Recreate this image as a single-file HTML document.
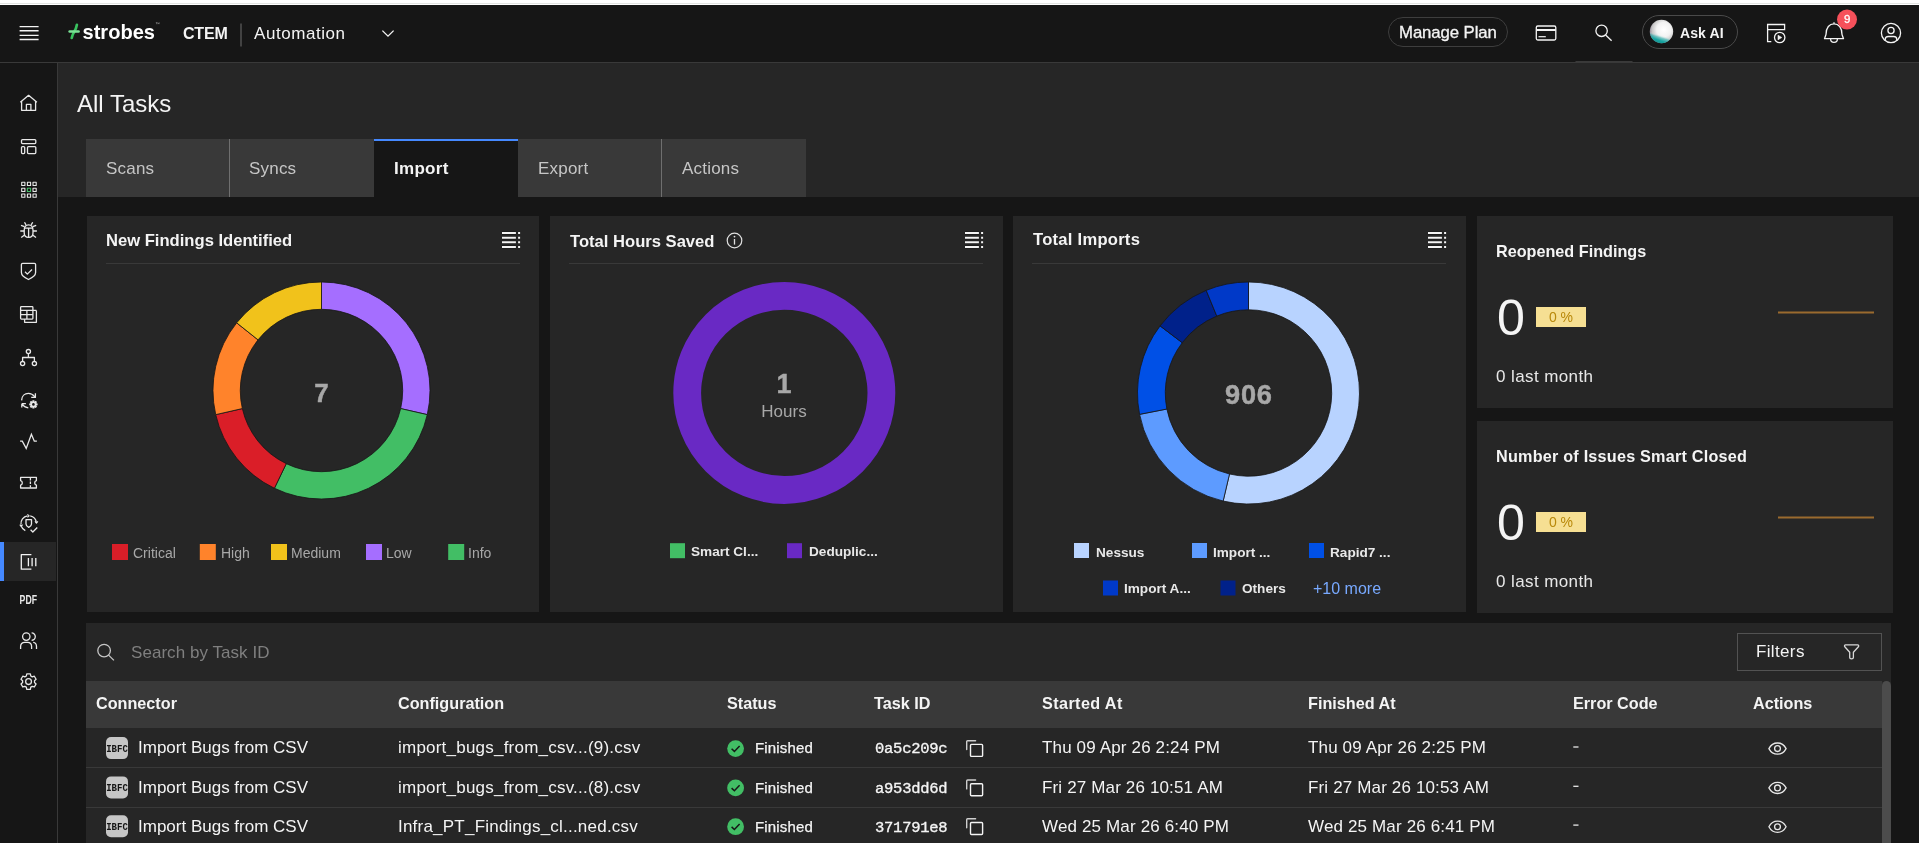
<!DOCTYPE html>
<html><head><meta charset="utf-8">
<style>
*{box-sizing:border-box;margin:0;padding:0}
html,body{width:1919px;height:843px;overflow:hidden;background:#161616;font-family:"Liberation Sans",sans-serif;color:#f4f4f4}
.a{position:absolute}
.t{position:absolute;line-height:1;white-space:nowrap;will-change:transform}
.b{font-weight:bold}
svg{position:absolute;overflow:visible;will-change:transform}
</style></head><body>
<!-- top white strip -->
<div class="a" style="left:0;top:0;width:1919px;height:5px;background:#fff"></div>
<div class="a" style="left:0;top:3px;width:1919px;height:1px;background:#e2e4e2"></div>
<!-- header -->
<div class="a" style="left:0;top:5px;width:1919px;height:57px;background:#161616"></div>
<div class="a" style="left:0;top:62px;width:1919px;height:1px;background:#393939"></div>
<div id="hdr">
<svg style="left:0;top:0" width="1919" height="62" viewBox="0 0 1919 62">
 <g stroke="#f4f4f4" stroke-width="1.3" fill="none">
  <path d="M19.6 26.55H38.6M19.6 30.75H38.6M19.6 35.3H38.6M19.6 39.5H38.6"/>
 </g>
 <!-- logo bolt -->
 <path d="M76.9 24.8C76.4 27.6 75.6 29.5 74.4 31.4C73.2 33.3 72.3 35.4 71.7 38" stroke="#39c25f" stroke-width="2.7" fill="none" stroke-linecap="round"/>
 <path d="M69.6 31.4H78.6" stroke="#7be296" stroke-width="2.5" stroke-linecap="round"/>
 <text x="82.5" y="38.9" font-family="Liberation Sans" font-weight="bold" font-size="20.5" fill="#fff" textLength="72.5" lengthAdjust="spacingAndGlyphs">strobes</text>
 <path d="M155.8 22.6h1.4M156.5 22.6v1.6M157.8 24.2v-1.6l0.7 1 0.7 -1v1.6" stroke="#bbb" stroke-width="0.4" fill="none"/>
 <path d="M241 23.5V46.5" stroke="#6f6f6f" stroke-width="1"/>
 <path d="M382.4 30.6L388 36.2L393.6 30.6" stroke="#f4f4f4" stroke-width="1.3" fill="none"/>
 <!-- manage plan -->
 <rect x="1388.5" y="17.5" width="119" height="29" rx="14.5" fill="none" stroke="#3e3e3e" stroke-width="1"/>
 <!-- card icon -->
 <g stroke="#f4f4f4" fill="none" stroke-width="1.3">
  <rect x="1536.3" y="26" width="19.5" height="14" rx="1.5"/>
  <path d="M1536.3 30H1555.8" stroke-width="2"/>
  <path d="M1538.5 36.7H1545.8" stroke-width="1.2"/>
  <circle cx="1601.6" cy="30.8" r="5.7"/>
  <path d="M1605.6 35L1611.6 40.8"/>
 </g>
 <!-- ask ai -->
 <rect x="1642.5" y="15.5" width="95" height="33" rx="16.5" fill="none" stroke="#4a4a4a" stroke-width="1"/>
 <defs>
  <radialGradient id="orb" cx="0.6" cy="0.42" r="0.62">
   <stop offset="0" stop-color="#ffffff"/><stop offset="0.5" stop-color="#f2f2f2"/><stop offset="0.8" stop-color="#c8c8c8"/><stop offset="1" stop-color="#8f8595"/>
  </radialGradient>
  <linearGradient id="teal" x1="0.3" y1="1" x2="0.55" y2="0.2">
   <stop offset="0" stop-color="#128f8d"/><stop offset="0.18" stop-color="#19a6a3"/><stop offset="0.33" stop-color="#2fb3b0" stop-opacity="0.55"/><stop offset="0.47" stop-color="#ffffff" stop-opacity="0"/>
  </linearGradient>
 </defs>
 <circle cx="1661.5" cy="31.5" r="11.7" fill="url(#orb)"/>
 <circle cx="1661.5" cy="31.5" r="11.7" fill="url(#teal)"/>
 <!-- cal play -->
 <g stroke="#f4f4f4" fill="none" stroke-width="1.3">
  <path d="M1771.3 41.6H1767.6V24.5H1784.6V29.6H1767.6"/>
  <circle cx="1779.7" cy="37.5" r="5.2"/>
  <path d="M1778 35.2V39.8L1781.8 37.5Z" fill="#f4f4f4" stroke-width="0.6"/>
  <!-- bell -->
  <path d="M1834 22.3V23.6M1826 34.5C1826 27.5 1829.5 23.8 1834 23.8C1838.5 23.8 1842 27.5 1842 34.5L1843.5 38.7H1824.5Z" stroke-linejoin="round"/>
  <path d="M1830.6 38.9A3.4 3.4 0 0 0 1837.4 38.9"/>
  <!-- user -->
  <circle cx="1891" cy="33" r="9.6"/>
  <circle cx="1891" cy="30.5" r="3.1"/>
  <path d="M1885.2 41.1V39.6C1885.2 37.5 1886.4 36.5 1888.3 36.5H1893.7C1895.6 36.5 1896.8 37.5 1896.8 39.6V41.1"/>
 </g>
 <circle cx="1847" cy="19.5" r="10" fill="#f6505a"/>
 <!-- search underline -->
 <path d="M1575.5 61.5H1632.5" stroke="#3a3a3a" stroke-width="1"/>
</svg>
<div class="t b" style="left:183px;top:25.5px;font-size:16px;color:#f4f4f4;letter-spacing:-0.2px">CTEM</div>
<div class="t" style="left:254px;top:24.5px;font-size:17px;color:#f4f4f4;letter-spacing:0.55px">Automation</div>
<div class="t" style="left:1398.8px;top:24.5px;font-size:16.8px;color:#f4f4f4;-webkit-text-stroke:0.3px #f4f4f4;letter-spacing:-0.1px">Manage Plan</div>
<div class="t b" style="left:1679.5px;top:26px;font-size:14px;color:#f4f4f4;letter-spacing:0.1px">Ask AI</div>
<div class="t" style="left:1843.6px;top:14px;font-size:11.5px;color:#fff;-webkit-text-stroke:0.3px #fff">9</div>
</div>
<!-- sidebar -->
<div class="a" style="left:0;top:63px;width:57px;height:780px;background:#161616"></div>
<div class="a" style="left:57px;top:63px;width:1px;height:780px;background:#393939"></div>
<div id="side">
<div class="a" style="left:0;top:542px;width:56px;height:39px;background:#262626"></div>
<div class="a" style="left:0;top:542px;width:4px;height:39px;background:#4589ff"></div>
<svg style="left:0;top:0" width="57" height="843" viewBox="0 0 57 843">
 <g stroke="#e8e8e8" stroke-width="1.3" fill="none" stroke-linejoin="round">
  <!-- home -->
  <path d="M20.3 102.2L28.6 95.3L36.9 102.2M21.6 101.2V110.3H35.6V101.2M26.4 110.3V104.4H30.9V110.3"/>
  <!-- layout -->
  <rect x="21.5" y="139.6" width="14.3" height="4" rx="1"/>
  <rect x="21.5" y="146.6" width="3.2" height="7" rx="1"/>
  <rect x="27.5" y="146.6" width="8.3" height="7" rx="1"/>
  <!-- grid -->
  <g stroke-width="1.1">
   <rect x="21.7" y="182.3" width="3.2" height="3.2"/><rect x="27.4" y="182.3" width="3.2" height="3.2"/><rect x="33" y="182.3" width="3.2" height="3.2"/>
   <rect x="21.7" y="188.3" width="3.2" height="3.2"/><rect x="33" y="188.3" width="3.2" height="3.2"/>
   <rect x="21.7" y="194" width="3.2" height="3.2"/><rect x="27.4" y="194" width="3.2" height="3.2"/><rect x="33" y="194" width="3.2" height="3.2"/>
   <rect x="27.4" y="188.3" width="3.2" height="3.2" stroke="#42be65"/>
  </g>
  <!-- bug -->
  <path d="M24.2 230.5C24.2 226.5 26 224.8 28.6 224.8C31.2 224.8 33 226.5 33 230.5V233C33 235.6 31.2 237.3 28.6 237.3C26 237.3 24.2 235.6 24.2 233Z"/>
  <path d="M28.6 228V237.3M24.2 228.2H33M26 224.9L24.5 222.2M31.2 224.9L32.7 222.2M24.2 231H20.3M33 231H36.9M24.4 226.7L21 225.3M32.8 226.7L36.2 225.3M24.6 235L21.2 237.6M32.6 235L36 237.6"/>
  <!-- shield check -->
  <path d="M21.4 264.6C21.4 263.8 22 263.3 22.7 263.3H34.4C35.1 263.3 35.6 263.8 35.6 264.6V272.5C35.6 275 33.3 277.3 28.5 279.5C23.7 277.3 21.4 275 21.4 272.5Z"/>
  <path d="M25 271.8L27.3 274.1L32 269.5"/>
  <!-- table copy -->
  <rect x="20.6" y="306.7" width="12.3" height="12.4" rx="0.8"/>
  <path d="M20.6 310.4H36.4M20.6 314.7H32.9M26.9 310.4V319.1"/>
  <path d="M36.4 310.4V322.3H24.6V319.3" />
  <!-- hierarchy -->
  <circle cx="28.4" cy="351.6" r="2.1"/>
  <circle cx="22.6" cy="363.6" r="2.1"/>
  <circle cx="34.4" cy="363.6" r="2.1"/>
  <path d="M28.4 353.7V357.5M22.6 361.5V357.5H34.4V361.5"/>
  <!-- refresh gear -->
  <path d="M21.6 400.4C21.8 396 24.8 393.4 28.4 393.4C31 393.4 33.2 394.7 34.9 396.8"/>
  <path d="M35.4 393.2V397.4H31.2"/>
  <path d="M21.8 403.7H25.9M21.8 403.7V407.4M22.2 404.1C23.6 406.3 25.7 407.5 28.3 407.9"/>
  <path d="M32.43 400.21L34.37 400.21L34.52 401.62L34.57 401.64L35.68 400.75L37.05 402.12L36.16 403.23L36.18 403.28L37.59 403.43L37.59 405.37L36.18 405.52L36.16 405.57L37.05 406.68L35.68 408.05L34.57 407.16L34.52 407.18L34.37 408.59L32.43 408.59L32.28 407.18L32.23 407.16L31.12 408.05L29.75 406.68L30.64 405.57L30.62 405.52L29.21 405.37L29.21 403.43L30.62 403.28L30.64 403.23L29.75 402.12L31.12 400.75L32.23 401.64L32.28 401.62Z" fill="#e8e8e8" stroke="none"/>
  <circle cx="33.4" cy="404.4" r="1.3" fill="#161616" stroke="none"/>
  <!-- activity -->
  <path d="M20.1 441.2L22.3 441.2L26.2 448.4L31.4 434.3L34.3 441.2H36.9" stroke-linejoin="miter"/>
  <!-- ticket -->
  <path d="M20.6 477.4H36.4V480.6A2.4 2.4 0 0 0 36.4 485.2V488H20.6V485.2A2.4 2.4 0 0 0 20.6 480.6Z"/>
  <path d="M30.4 478V480.5M30.4 481.6V484M30.4 485.2V487.6"/>
  <!-- shield rotate -->
  <path d="M21 524.5A7.7 7.7 0 0 1 27.5 515.8M30.2 515.8A7.7 7.7 0 0 1 36.3 522.5M25.3 530.6A7.7 7.7 0 0 1 21.3 526.2"/>
  <path d="M27.4 514.3L29.2 515.9L27.4 517.3M35 521.2L36.4 523.2L37.9 521.3M19.8 524.6L21.1 526.3L22.6 524.7" stroke-width="1.1"/>
  <path d="M26 519.6H31.5V524C31.5 525.5 30.4 526.5 28.75 527.3C27.1 526.5 26 525.5 26 524Z"/>
  <path d="M30.6 529.8L32.8 532L37.3 527.5"/>
  <!-- report active -->
  <path d="M31.4 554.7H21.3V569.2H31.4M28.4 558V566.2M32.1 558V566.2M35.8 558V566.2" stroke="#f4f4f4"/>
  <!-- people -->
  <circle cx="26.3" cy="636.6" r="3.7"/>
  <path d="M20.6 649V646.5C20.6 643.9 22.3 642.3 24.9 642.3H27.4C30 642.3 31.6 643.9 31.6 646.5V649"/>
  <path d="M31.6 632.9A3.7 3.7 0 0 1 31.6 640.3M33.2 642.4C35.3 642.7 36.5 644.3 36.5 646.5V649"/>
  <!-- gear -->
  <circle cx="28.55" cy="681.6" r="2.9"/>
  <path d="M26.77 673.90L30.33 673.90L30.80 676.04L32.24 676.87L34.33 676.21L36.10 679.29L34.49 680.76L34.49 682.44L36.10 683.91L34.33 686.99L32.24 686.33L30.80 687.16L30.33 689.30L26.77 689.30L26.30 687.16L24.86 686.33L22.77 686.99L21.00 683.91L22.61 682.44L22.61 680.76L21.00 679.29L22.77 676.21L24.86 676.87L26.30 676.04Z" stroke-linejoin="round"/>
 </g>
 <text x="19.6" y="604.3" font-family="Liberation Sans" font-weight="bold" font-size="12" fill="#e8e8e8" textLength="17.4" lengthAdjust="spacingAndGlyphs">PDF</text>
</svg>
</div>
<!-- title area -->
<div class="a" style="left:58px;top:63px;width:1861px;height:134px;background:#262626"></div>
<div class="t" style="left:77px;top:92px;font-size:24px;color:#f4f4f4">All Tasks</div>
<div id="tabs">
<div class="a" style="left:86px;top:139px;width:143px;height:58px;background:#393939"></div>
<div class="a" style="left:229px;top:139px;width:1px;height:58px;background:#6f6f6f"></div>
<div class="a" style="left:230px;top:139px;width:144px;height:58px;background:#393939"></div>
<div class="a" style="left:374px;top:139px;width:144px;height:58px;background:#161616"></div>
<div class="a" style="left:374px;top:139px;width:144px;height:2px;background:#4589ff"></div>
<div class="a" style="left:518px;top:139px;width:143px;height:58px;background:#393939"></div>
<div class="a" style="left:661px;top:139px;width:1px;height:58px;background:#6f6f6f"></div>
<div class="a" style="left:662px;top:139px;width:144px;height:58px;background:#393939"></div>
<div class="t" style="left:105.5px;top:159.8px;font-size:17px;color:#c6c6c6;letter-spacing:0.2px">Scans</div>
<div class="t" style="left:249px;top:159.8px;font-size:17px;color:#c6c6c6;letter-spacing:0.2px">Syncs</div>
<div class="t b" style="left:393.5px;top:159.8px;font-size:17px;color:#f4f4f4;letter-spacing:0.3px">Import</div>
<div class="t" style="left:537.5px;top:159.8px;font-size:17px;color:#c6c6c6;letter-spacing:0.2px">Export</div>
<div class="t" style="left:682px;top:159.8px;font-size:17px;color:#c6c6c6;letter-spacing:0.2px">Actions</div>
</div>
<!-- content -->
<div class="a" style="left:58px;top:197px;width:1861px;height:646px;background:#161616"></div>
<div class="a" style="left:87px;top:216px;width:452px;height:396px;background:#262626"></div>
<div class="a" style="left:550px;top:216px;width:453px;height:396px;background:#262626"></div>
<div class="a" style="left:1013px;top:216px;width:453px;height:396px;background:#262626"></div>
<div class="a" style="left:1477px;top:216px;width:416px;height:192px;background:#262626"></div>
<div class="a" style="left:1477px;top:421px;width:416px;height:192px;background:#262626"></div>
<div id="cards">
<svg style="left:0;top:0" width="1919" height="843" viewBox="0 0 1919 843">
 <path d="M106 263.5H520M569 263.5H983M1032 263.5H1446" stroke="#393939" stroke-width="1"/>
 <g transform="translate(502,232)"><g stroke="#000" stroke-opacity="0.35" stroke-width="3.2"><path d="M0 1.1H13.9M0 5.8H13.9M0 10.3H13.9M0 14.9H13.9"/></g><g stroke="#f4f4f4" stroke-width="2"><path d="M0 1.1H13.9M0 5.8H13.9M0 10.3H13.9M0 14.9H13.9M16.1 1.1H18.1M16.1 5.8H18.1M16.1 10.3H18.1M16.1 14.9H18.1"/></g></g>
 <g transform="translate(965,232)"><g stroke="#000" stroke-opacity="0.35" stroke-width="3.2"><path d="M0 1.1H13.9M0 5.8H13.9M0 10.3H13.9M0 14.9H13.9"/></g><g stroke="#f4f4f4" stroke-width="2"><path d="M0 1.1H13.9M0 5.8H13.9M0 10.3H13.9M0 14.9H13.9M16.1 1.1H18.1M16.1 5.8H18.1M16.1 10.3H18.1M16.1 14.9H18.1"/></g></g>
 <g transform="translate(1428,232)"><g stroke="#000" stroke-opacity="0.35" stroke-width="3.2"><path d="M0 1.1H13.9M0 5.8H13.9M0 10.3H13.9M0 14.9H13.9"/></g><g stroke="#f4f4f4" stroke-width="2"><path d="M0 1.1H13.9M0 5.8H13.9M0 10.3H13.9M0 14.9H13.9M16.1 1.1H18.1M16.1 5.8H18.1M16.1 10.3H18.1M16.1 14.9H18.1"/></g></g>
 <circle cx="734.5" cy="240.5" r="7.3" fill="none" stroke="#e0e0e0" stroke-width="1.2"/>
 <path d="M734.5 239V244.6" stroke="#e0e0e0" stroke-width="1.3"/>
 <circle cx="734.5" cy="236.6" r="0.9" fill="#e0e0e0"/>
 <path d="M321.50 282.00A108.5 108.5 0 0 1 427.28 414.64L400.66 408.57A81.2 81.2 0 0 0 321.50 309.30Z" fill="#a56eff" stroke="#161616" stroke-width="0.8"/>
<path d="M427.28 414.64A108.5 108.5 0 0 1 274.42 488.26L286.27 463.66A81.2 81.2 0 0 0 400.66 408.57Z" fill="#42be65" stroke="#161616" stroke-width="0.8"/>
<path d="M274.42 488.26A108.5 108.5 0 0 1 215.72 414.64L242.34 408.57A81.2 81.2 0 0 0 286.27 463.66Z" fill="#da1e28" stroke="#161616" stroke-width="0.8"/>
<path d="M215.72 414.64A108.5 108.5 0 0 1 236.67 322.85L258.02 339.87A81.2 81.2 0 0 0 242.34 408.57Z" fill="#ff832b" stroke="#161616" stroke-width="0.8"/>
<path d="M236.67 322.85A108.5 108.5 0 0 1 321.50 282.00L321.50 309.30A81.2 81.2 0 0 0 258.02 339.87Z" fill="#f1c21b" stroke="#161616" stroke-width="0.8"/>
 <circle cx="784.3" cy="392.9" r="97.1" fill="none" stroke="#6929c4" stroke-width="27.8"/>
 <path d="M1248.50 282.00A111 111 0 1 1 1223.15 501.07L1229.50 474.00A83.2 83.2 0 1 0 1248.50 309.80Z" fill="#b8d3ff" stroke="#161616" stroke-width="0.8"/>
<path d="M1223.15 501.07A111 111 0 0 1 1139.58 414.37L1166.86 409.02A83.2 83.2 0 0 0 1229.50 474.00Z" fill="#5d9bff" stroke="#161616" stroke-width="0.8"/>
<path d="M1139.58 414.37A111 111 0 0 1 1160.09 325.89L1182.23 342.70A83.2 83.2 0 0 0 1166.86 409.02Z" fill="#0050e6" stroke="#161616" stroke-width="0.8"/>
<path d="M1160.09 325.89A111 111 0 0 1 1206.20 290.38L1216.79 316.08A83.2 83.2 0 0 0 1182.23 342.70Z" fill="#00218a" stroke="#161616" stroke-width="0.8"/>
<path d="M1206.20 290.38A111 111 0 0 1 1248.50 282.00L1248.50 309.80A83.2 83.2 0 0 0 1216.79 316.08Z" fill="#0039c8" stroke="#161616" stroke-width="0.8"/>
 <rect x="112" y="544" width="16" height="16" fill="#da1e28"/>
 <rect x="199.8" y="544" width="16" height="16" fill="#ff832b"/>
 <rect x="271" y="544" width="16" height="16" fill="#f1c21b"/>
 <rect x="366" y="544" width="16" height="16" fill="#a56eff"/>
 <rect x="448.2" y="544" width="16" height="16" fill="#42be65"/>
 <rect x="670" y="543.2" width="15" height="15" fill="#42be65"/>
 <rect x="787" y="543.2" width="15" height="15" fill="#6929c4"/>
 <rect x="1074" y="543" width="15" height="15" fill="#b8d3ff"/>
 <rect x="1192" y="543" width="15" height="15" fill="#5d9bff"/>
 <rect x="1309" y="543" width="15" height="15" fill="#0050e6"/>
 <rect x="1103" y="580.5" width="15" height="15" fill="#0039c8"/>
 <rect x="1220.5" y="580.5" width="15" height="15" fill="#00218a"/>
 <path d="M1778 312.5H1874" stroke="#9a6a2e" stroke-width="2"/>
 <path d="M1778 517.5H1874" stroke="#9a6a2e" stroke-width="2"/>
</svg>
<div class="t b" style="left:106px;top:233px;font-size:16.6px;color:#f4f4f4">New Findings Identified</div>
<div class="t b" style="left:569.5px;top:234px;font-size:16.6px;color:#f4f4f4">Total Hours Saved</div>
<div class="t b" style="left:1032.5px;top:231.5px;font-size:16.6px;color:#f4f4f4;letter-spacing:0.25px">Total Imports</div>
<div class="t b" style="left:306px;top:379.7px;font-size:26px;-webkit-text-stroke:0.4px #a8a8a8;color:#a8a8a8;width:31px;text-align:center">7</div>
<div class="t b" style="left:760px;top:370.7px;font-size:27px;-webkit-text-stroke:0.4px #a8a8a8;color:#a8a8a8;width:48px;text-align:center">1</div>
<div class="t" style="left:740px;top:403.2px;font-size:17px;color:#a8a8a8;width:88px;text-align:center">Hours</div>
<div class="t b" style="left:1208px;top:380.9px;font-size:27.2px;color:#a8a8a8;width:81px;text-align:center;letter-spacing:0.7px;text-indent:0.7px;-webkit-text-stroke:0.5px #a8a8a8">906</div>
<div class="t" style="left:132.6px;top:546px;font-size:14px;color:#a8a8a8">Critical</div>
<div class="t" style="left:220.7px;top:546px;font-size:14px;color:#a8a8a8">High</div>
<div class="t" style="left:291.1px;top:546px;font-size:14px;color:#a8a8a8">Medium</div>
<div class="t" style="left:386.4px;top:546px;font-size:14px;color:#a8a8a8">Low</div>
<div class="t" style="left:468.1px;top:546px;font-size:14px;color:#a8a8a8">Info</div>
<div class="t b" style="left:690.8px;top:545.3px;font-size:13.6px;color:#e8e8e8">Smart Cl...</div>
<div class="t b" style="left:808.5px;top:545.3px;font-size:13.6px;color:#e8e8e8">Deduplic...</div>
<div class="t b" style="left:1095.5px;top:545.5px;font-size:13.6px;color:#e8e8e8">Nessus</div>
<div class="t b" style="left:1213px;top:545.5px;font-size:13.6px;color:#e8e8e8">Import ...</div>
<div class="t b" style="left:1330.2px;top:545.5px;font-size:13.6px;color:#e8e8e8">Rapid7 ...</div>
<div class="t b" style="left:1124px;top:582.2px;font-size:13.6px;color:#e8e8e8">Import A...</div>
<div class="t b" style="left:1241.6px;top:582.2px;font-size:13.6px;color:#e8e8e8">Others</div>
<div class="t" style="left:1313px;top:580.6px;font-size:16px;color:#78a9ff">+10 more</div>
<!-- KPI -->
<div class="t b" style="left:1496px;top:243.3px;font-size:16.2px;color:#f4f4f4">Reopened Findings</div>
<div class="t" style="left:1496.7px;top:293px;font-size:50.2px;color:#f4f4f4;font-weight:300">0</div>
<div class="a" style="left:1536px;top:306.6px;width:50px;height:20.2px;background:#f6df93"></div>
<div class="t" style="left:1536px;top:310.2px;width:50px;text-align:center;font-size:14px;color:#b8880a">0 %</div>
<div class="t" style="left:1496px;top:368px;font-size:17px;color:#e8e8e8;letter-spacing:0.4px">0 last month</div>
<div class="t b" style="left:1496px;top:448.3px;font-size:16.2px;color:#f4f4f4;letter-spacing:0.22px">Number of Issues Smart Closed</div>
<div class="t" style="left:1496.7px;top:498px;font-size:50.2px;color:#f4f4f4;font-weight:300">0</div>
<div class="a" style="left:1536px;top:511.6px;width:50px;height:20.2px;background:#f6df93"></div>
<div class="t" style="left:1536px;top:515.2px;width:50px;text-align:center;font-size:14px;color:#b8880a">0 %</div>
<div class="t" style="left:1496px;top:573px;font-size:17px;color:#e8e8e8;letter-spacing:0.4px">0 last month</div>
</div>
<!-- table -->
<div class="a" style="left:86px;top:623px;width:1805px;height:220px;background:#262626"></div>
<div class="a" style="left:86px;top:681px;width:1796px;height:47px;background:#393939"></div>
<div id="table">
<div class="a" style="left:1882px;top:681px;width:9px;height:162px;background:#262626"></div>
<div class="a" style="left:1882px;top:681px;width:9px;height:170px;background:#4c4c4c;border-radius:4.5px"></div>
<div class="a" style="left:1737px;top:633px;width:145px;height:38px;border:1px solid #525252"></div>
<svg style="left:0;top:0" width="1919" height="843" viewBox="0 0 1919 843">
 <g stroke="#c6c6c6" stroke-width="1.3" fill="none"><circle cx="104.1" cy="650.6" r="6.3"/><path d="M108.6 655.1L113.9 660.4"/></g>
 <path d="M1845.6 644.9H1857.6C1858.6 644.9 1859.1 646 1858.4 646.8L1853.4 652.3V657.6C1853.4 658.4 1852.9 658.9 1851.5 658.9C1850.1 658.9 1849.7 658.4 1849.7 657.6V652.3L1844.8 646.8C1844.1 646 1844.6 644.9 1845.6 644.9Z" stroke="#d8d8d8" stroke-width="1.3" fill="none" stroke-linejoin="round"/>
 <rect x="106" y="737.1" width="22" height="22" rx="5" fill="#c6c6c6"/>
<text x="117" y="751.6" text-anchor="middle" font-family="Liberation Mono" font-weight="bold" font-size="10.6" fill="#161616" textLength="21.6" lengthAdjust="spacingAndGlyphs">IBFC</text>
<circle cx="735.6" cy="748.6" r="8.4" fill="#42be65"/>
<path d="M731.6 748.8L734.4 751.4L739.6 746.0" stroke="#161616" stroke-width="1.5" fill="none"/>
<g stroke="#e8e8e8" stroke-width="1.4" fill="none" stroke-linecap="round"><path d="M966.7 749.6V741.6Q966.7 740.7 967.6 740.7H975.6" stroke="#cfcfcf"/><rect x="970.5" y="744.4" width="12.1" height="12" rx="1" stroke="#f4f4f4"/></g>
<g stroke="#e8e8e8" stroke-width="1.3" fill="none"><path d="M1768.9 748.6C1771 744.6 1774 743.0 1777.5 743.0C1781 743.0 1784 744.6 1786.1 748.6C1784 752.6 1781 754.2 1777.5 754.2C1774 754.2 1771 752.6 1768.9 748.6Z"/><circle cx="1777.5" cy="748.6" r="2.9"/></g>
<path d="M1573.3 747.0H1578.5" stroke="#e8e8e8" stroke-width="1.3"/>
<rect x="106" y="776.4" width="22" height="22" rx="5" fill="#c6c6c6"/>
<text x="117" y="790.9" text-anchor="middle" font-family="Liberation Mono" font-weight="bold" font-size="10.6" fill="#161616" textLength="21.6" lengthAdjust="spacingAndGlyphs">IBFC</text>
<circle cx="735.6" cy="787.9" r="8.4" fill="#42be65"/>
<path d="M731.6 788.1L734.4 790.7L739.6 785.3" stroke="#161616" stroke-width="1.5" fill="none"/>
<g stroke="#e8e8e8" stroke-width="1.4" fill="none" stroke-linecap="round"><path d="M966.7 788.9V780.9Q966.7 780.0 967.6 780.0H975.6" stroke="#cfcfcf"/><rect x="970.5" y="783.7" width="12.1" height="12" rx="1" stroke="#f4f4f4"/></g>
<g stroke="#e8e8e8" stroke-width="1.3" fill="none"><path d="M1768.9 787.9C1771 783.9 1774 782.3 1777.5 782.3C1781 782.3 1784 783.9 1786.1 787.9C1784 791.9 1781 793.5 1777.5 793.5C1774 793.5 1771 791.9 1768.9 787.9Z"/><circle cx="1777.5" cy="787.9" r="2.9"/></g>
<path d="M1573.3 786.3H1578.5" stroke="#e8e8e8" stroke-width="1.3"/>
<rect x="106" y="815.2" width="22" height="22" rx="5" fill="#c6c6c6"/>
<text x="117" y="829.7" text-anchor="middle" font-family="Liberation Mono" font-weight="bold" font-size="10.6" fill="#161616" textLength="21.6" lengthAdjust="spacingAndGlyphs">IBFC</text>
<circle cx="735.6" cy="826.7" r="8.4" fill="#42be65"/>
<path d="M731.6 826.9L734.4 829.5L739.6 824.1" stroke="#161616" stroke-width="1.5" fill="none"/>
<g stroke="#e8e8e8" stroke-width="1.4" fill="none" stroke-linecap="round"><path d="M966.7 827.7V819.7Q966.7 818.8 967.6 818.8H975.6" stroke="#cfcfcf"/><rect x="970.5" y="822.5" width="12.1" height="12" rx="1" stroke="#f4f4f4"/></g>
<g stroke="#e8e8e8" stroke-width="1.3" fill="none"><path d="M1768.9 826.7C1771 822.7 1774 821.1 1777.5 821.1C1781 821.1 1784 822.7 1786.1 826.7C1784 830.7 1781 832.3 1777.5 832.3C1774 832.3 1771 830.7 1768.9 826.7Z"/><circle cx="1777.5" cy="826.7" r="2.9"/></g>
<path d="M1573.3 825.1H1578.5" stroke="#e8e8e8" stroke-width="1.3"/>
<path d="M86 767.5H1882" stroke="#393939" stroke-width="1"/>
<path d="M86 807.5H1882" stroke="#393939" stroke-width="1"/>
</svg>
<div class="t" style="left:130.9px;top:644.0px;font-size:17px;color:#7f7f7f;letter-spacing:0.05px">Search by Task ID</div>
<div class="t" style="left:1755.9px;top:643.2px;font-size:17px;color:#f4f4f4;letter-spacing:0.35px">Filters</div>
<div class="t b" style="left:96.4px;top:695.4px;font-size:16.2px;color:#f4f4f4">Connector</div>
<div class="t b" style="left:398.3px;top:695.4px;font-size:16.2px;color:#f4f4f4">Configuration</div>
<div class="t b" style="left:726.6px;top:695.4px;font-size:16.2px;color:#f4f4f4">Status</div>
<div class="t b" style="left:874.3px;top:695.4px;font-size:16.2px;color:#f4f4f4">Task ID</div>
<div class="t b" style="left:1042.2px;top:695.4px;font-size:16.2px;color:#f4f4f4;letter-spacing:0.4px">Started At</div>
<div class="t b" style="left:1307.5px;top:695.4px;font-size:16.2px;color:#f4f4f4">Finished At</div>
<div class="t b" style="left:1572.8px;top:695.4px;font-size:16.2px;color:#f4f4f4">Error Code</div>
<div class="t b" style="left:1753.4px;top:695.4px;font-size:16.2px;color:#f4f4f4">Actions</div>
<div class="t" style="left:137.7px;top:738.9px;font-size:17px;color:#f4f4f4">Import Bugs from CSV</div>
<div class="t" style="left:398.3px;top:738.9px;font-size:17px;color:#f4f4f4;letter-spacing:0.22px">import_bugs_from_csv...(9).csv</div>
<div class="t" style="left:755.3px;top:740.2px;font-size:15px;color:#f4f4f4;-webkit-text-stroke:0.25px #f4f4f4;letter-spacing:0.15px">Finished</div>
<div class="t" style="left:875.4px;top:742.1px;font-size:15.5px;letter-spacing:-0.25px;font-family:Liberation Mono;color:#f4f4f4;-webkit-text-stroke:0.35px #f4f4f4">0a5c209c</div>
<div class="t" style="left:1042.2px;top:738.9px;font-size:17px;color:#f4f4f4;letter-spacing:0.15px">Thu 09 Apr 26 2:24 PM</div>
<div class="t" style="left:1307.6px;top:738.9px;font-size:17px;color:#f4f4f4;letter-spacing:0.15px">Thu 09 Apr 26 2:25 PM</div>
<div class="t" style="left:137.7px;top:778.6px;font-size:17px;color:#f4f4f4">Import Bugs from CSV</div>
<div class="t" style="left:398.3px;top:778.6px;font-size:17px;color:#f4f4f4;letter-spacing:0.22px">import_bugs_from_csv...(8).csv</div>
<div class="t" style="left:755.3px;top:779.9px;font-size:15px;color:#f4f4f4;-webkit-text-stroke:0.25px #f4f4f4;letter-spacing:0.15px">Finished</div>
<div class="t" style="left:875.4px;top:781.8px;font-size:15.5px;letter-spacing:-0.25px;font-family:Liberation Mono;color:#f4f4f4;-webkit-text-stroke:0.35px #f4f4f4">a953dd6d</div>
<div class="t" style="left:1042.2px;top:778.6px;font-size:17px;color:#f4f4f4;letter-spacing:0.15px">Fri 27 Mar 26 10:51 AM</div>
<div class="t" style="left:1307.6px;top:778.6px;font-size:17px;color:#f4f4f4;letter-spacing:0.15px">Fri 27 Mar 26 10:53 AM</div>
<div class="t" style="left:137.7px;top:817.6px;font-size:17px;color:#f4f4f4">Import Bugs from CSV</div>
<div class="t" style="left:398.3px;top:817.6px;font-size:17px;color:#f4f4f4;letter-spacing:0.22px">Infra_PT_Findings_cl...ned.csv</div>
<div class="t" style="left:755.3px;top:818.9px;font-size:15px;color:#f4f4f4;-webkit-text-stroke:0.25px #f4f4f4;letter-spacing:0.15px">Finished</div>
<div class="t" style="left:875.4px;top:820.8px;font-size:15.5px;letter-spacing:-0.25px;font-family:Liberation Mono;color:#f4f4f4;-webkit-text-stroke:0.35px #f4f4f4">371791e8</div>
<div class="t" style="left:1042.2px;top:817.6px;font-size:17px;color:#f4f4f4;letter-spacing:0.15px">Wed 25 Mar 26 6:40 PM</div>
<div class="t" style="left:1307.6px;top:817.6px;font-size:17px;color:#f4f4f4;letter-spacing:0.15px">Wed 25 Mar 26 6:41 PM</div>
</div>
</body></html>
